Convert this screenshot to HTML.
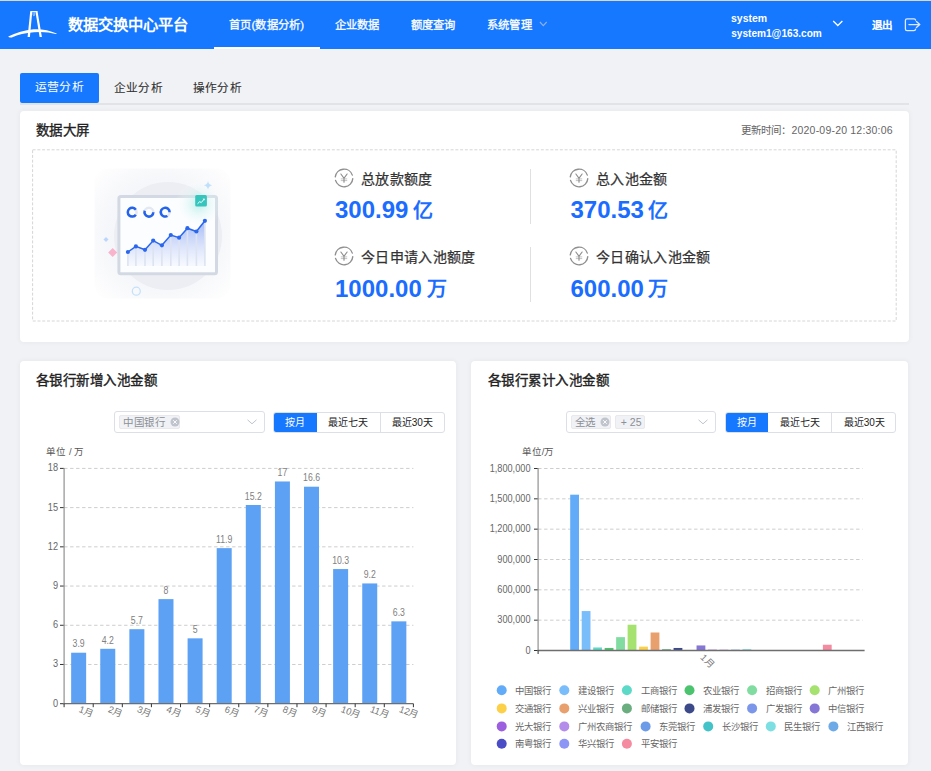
<!DOCTYPE html>
<html lang="zh-CN">
<head>
<meta charset="utf-8">
<style>
*{margin:0;padding:0;box-sizing:border-box;}
html,body{width:931px;height:771px;overflow:hidden;background:#f0f2f5;font-family:"Liberation Sans",sans-serif;}
.abs{position:absolute;}
.t{position:absolute;white-space:nowrap;line-height:1;}
#hdr{position:absolute;left:0;top:1px;width:931px;height:48px;background:#1677ff;}
#topline{position:absolute;left:0;top:0;width:931px;height:1px;background:#dcd8d0;}
.nav{color:#fff;font-size:11.3px;-webkit-text-stroke:0.3px #fff;letter-spacing:0.2px;}
.card{position:absolute;background:#fff;border-radius:4px;box-shadow:0 0 5px 1px rgba(0,0,0,0.04);}
.ctitle{font-size:13.5px;letter-spacing:0.55px;font-weight:400;color:#222;-webkit-text-stroke:0.35px #222;}
.stat-lbl{font-size:14px;color:#333;font-weight:400;-webkit-text-stroke:0.25px #333;letter-spacing:0.35px;}
.stat-num{font-size:24px;color:#1a6dff;font-weight:bold;}
.stat-unit{font-size:20px;color:#1a6dff;font-weight:bold;}
</style>
</head>
<body>
<div id="topline"></div>
<div id="hdr"></div>
<!-- logo -->
<svg class="abs" style="left:0;top:0" width="70" height="48" viewBox="0 0 70 48">
  <g fill="#fff">
  <path d="M8.2 36.6 Q 20 30.6 33.5 29.2 Q 46 28.6 56.6 33.4 Q 56.8 34.2 55.8 33.9 Q 46 31.4 34 32.3 Q 21 33.4 11.8 37.4 Q 8.6 37.8 8.2 36.6 Z"/>
  <path d="M30.2 11.4 L32.3 11.4 L29.9 36.9 L27.6 36.9 Z"/>
  <path d="M35.4 11.2 L37.5 11.2 L41.9 36.9 L39.6 36.9 Z"/>
  <rect x="30.4" y="11.1" width="7" height="0.9"/>
  </g>
  <g fill="none" stroke="#fff" stroke-width="0.7" opacity="0.85"><path d="M33.1 11.8 V15.2 Q33.9 16.6 34.7 15.2 V11.8"/></g>
</svg>
<div class="t" style="left:68px;top:16.5px;font-size:15.3px;font-weight:bold;color:#fff;">数据交换中心平台</div>
<div class="t nav" style="left:229px;top:19.8px;">首页(数据分析)</div>
<div class="abs" style="left:213.5px;top:47px;width:106.5px;height:2px;background:#fff;"></div>
<div class="t nav" style="left:334.5px;top:19.8px;">企业数据</div>
<div class="t nav" style="left:410.5px;top:19.8px;">额度查询</div>
<div class="t nav" style="left:487px;top:19.8px;">系统管理</div>
<svg class="abs" style="left:535px;top:17px" width="16" height="12"><path d="M4.9 5 L8.3 8.6 L11.7 5" fill="none" stroke="#8fb0e6" stroke-width="1.1"/></svg>
<div class="t" style="left:731px;top:13.2px;font-size:10.5px;font-weight:bold;color:#fff;">system</div>
<div class="t" style="left:731.2px;top:28.5px;font-size:10.1px;font-weight:bold;color:#fff;">system1@163.com</div>
<svg class="abs" style="left:830px;top:17px" width="16" height="12"><path d="M3.2 4 L7.8 8.5 L12.4 4" fill="none" stroke="#fff" stroke-width="1.3"/></svg>
<div class="t nav" style="left:871.8px;top:20px;font-size:10.5px;-webkit-text-stroke:0.55px #fff;letter-spacing:0.6px;">退出</div>
<svg class="abs" style="left:900px;top:14px" width="26" height="22"><g fill="none" stroke="#dfe9ff" stroke-width="1.3" stroke-linecap="round" stroke-linejoin="round"><path d="M15.6 6.2 Q15.4 4.8 14 4.8 H7 Q5.4 4.8 5.4 6.4 V15 Q5.4 16.6 7 16.6 H14 Q15.4 16.6 15.6 15.2"/><path d="M8.9 10.6 H19.6 M16.4 7.6 L19.8 10.6 L16.4 13.6"/></g></svg>

<!-- tabs -->
<div class="abs" style="left:20px;top:103.2px;width:889px;height:1.8px;background:#e2e3e6;"></div>
<div class="abs" style="left:20px;top:73px;width:79px;height:30.4px;background:#1677ff;border-radius:2px;"></div>
<div class="t" style="left:34.5px;top:82px;font-size:11.85px;color:#fff;letter-spacing:0.35px;">运营分析</div>
<div class="t" style="left:113.6px;top:82px;font-size:11.7px;color:#333;-webkit-text-stroke:0.1px #333;letter-spacing:0.35px;">企业分析</div>
<div class="t" style="left:192.6px;top:82px;font-size:11.7px;color:#333;-webkit-text-stroke:0.1px #333;letter-spacing:0.35px;">操作分析</div>

<!-- card 1 -->
<div class="card" style="left:20px;top:110.8px;width:889px;height:230.8px;"></div>
<div class="t ctitle" style="left:35.5px;top:124px;">数据大屏</div>
<div class="t" style="left:740.5px;top:125.3px;font-size:10.5px;letter-spacing:0.2px;color:#666;">更新时间：2020-09-20 12:30:06</div>
<svg class="abs" style="left:0;top:0" width="931" height="340"><rect x="32.6" y="149.8" width="863.6" height="171.2" fill="none" stroke="#d6d6d6" stroke-width="1" stroke-dasharray="3 1.75"/></svg>



<!-- illustration -->
<svg class="abs" style="left:0;top:0" width="260" height="320" viewBox="0 0 260 320">
<defs>
<radialGradient id="bgsq" cx="0.5" cy="0.5" r="0.7"><stop offset="0" stop-color="#eef1f6"/><stop offset="0.6" stop-color="#f6f7fa"/><stop offset="1" stop-color="#ffffff"/></radialGradient>
<linearGradient id="areag" x1="0" y1="0" x2="0" y2="1"><stop offset="0" stop-color="#a3b9f5"/><stop offset="1" stop-color="#f3f6fe" stop-opacity="0.6"/></linearGradient>
<radialGradient id="glow" cx="0.5" cy="0.5" r="0.5"><stop offset="0" stop-color="#a8e9e4" stop-opacity="0.75"/><stop offset="1" stop-color="#ffffff" stop-opacity="0"/></radialGradient>
</defs>
<rect x="94.5" y="168.6" width="136" height="130" rx="14" fill="url(#bgsq)"/>
<circle cx="168" cy="236" r="54" fill="#eceef3"/>
<rect x="118.9" y="196.4" width="97.6" height="77.3" rx="2" fill="#fcfdff" stroke="#d3d9e3" stroke-width="3"/>
<circle cx="199" cy="204" r="24" fill="url(#glow)"/>
<rect x="195.2" y="195.1" width="11.7" height="11.5" rx="1.5" fill="#36c5bd"/>
<path d="M197.5 203.8 L199.8 201.6 L201.2 202.6 L204.3 199" fill="none" stroke="#fff" stroke-width="1"/>
<path d="M202.6 198.8 L204.6 198.6 L204.4 200.6 Z" fill="#fff"/>
<path d="M127.9,266 L127.9,252 L135.9,246.4 L145,249.8 L153.2,240.6 L161.9,245.3 L170.8,235 L179.1,237.7 L187.4,228.2 L196.4,231.5 L204.9,220.8 L204.9,266 Z" fill="url(#areag)"/>
<g stroke="#dde3f0" stroke-width="1.6"><line x1="127.9" y1="252" x2="127.9" y2="265.9"/><line x1="135.9" y1="246.4" x2="135.9" y2="265.9"/><line x1="145" y1="249.8" x2="145" y2="265.9"/><line x1="153.2" y1="240.6" x2="153.2" y2="265.9"/><line x1="161.9" y1="245.3" x2="161.9" y2="265.9"/><line x1="170.8" y1="235" x2="170.8" y2="265.9"/><line x1="179.1" y1="237.7" x2="179.1" y2="265.9"/><line x1="187.4" y1="228.2" x2="187.4" y2="265.9"/><line x1="196.4" y1="231.5" x2="196.4" y2="265.9"/><line x1="204.9" y1="220.8" x2="204.9" y2="265.9"/></g>
<polyline points="127.9,252 135.9,246.4 145,249.8 153.2,240.6 161.9,245.3 170.8,235 179.1,237.7 187.4,228.2 196.4,231.5 204.9,220.8" fill="none" stroke="#2b67ee" stroke-width="1.5"/>
<g fill="#2b67ee"><circle cx="127.9" cy="252" r="2.1"/><circle cx="135.9" cy="246.4" r="2.1"/><circle cx="145" cy="249.8" r="2.1"/><circle cx="153.2" cy="240.6" r="2.1"/><circle cx="161.9" cy="245.3" r="2.1"/><circle cx="170.8" cy="235" r="2.1"/><circle cx="179.1" cy="237.7" r="2.1"/><circle cx="187.4" cy="228.2" r="2.1"/><circle cx="196.4" cy="231.5" r="2.1"/><circle cx="204.9" cy="220.8" r="2.1"/></g>
<g fill="none" stroke-width="2.5"><circle cx="132.2" cy="212.2" r="4.4" stroke="#e4e8f0"/><path d="M135.80 209.68 A4.4 4.4 0 1 0 135.80 214.72" stroke="#2463eb"/><circle cx="148.9" cy="212.2" r="4.4" stroke="#e4e8f0"/><path d="M153.30 212.20 A4.4 4.4 0 1 1 144.77 210.70" stroke="#2463eb"/><circle cx="165.2" cy="212.2" r="4.4" stroke="#e4e8f0"/><path d="M167.40 216.01 A4.4 4.4 0 1 1 169.60 212.20" stroke="#2463eb"/></g>
<path d="M112.7 248 L117.2 252.5 L112.7 257 L108.2 252.5 Z" fill="#f9b3cc"/>
<path d="M106 236.9 L108.5 239.4 L106 241.9 L103.5 239.4 Z" fill="#bcd6fb"/>
<path d="M208 181 Q208.6 184.7 212.3 185.3 Q208.6 185.9 208 189.6 Q207.4 185.9 203.7 185.3 Q207.4 184.7 208 181 Z" fill="#bfe0fb"/>
<circle cx="136.3" cy="291.2" r="4" fill="none" stroke="#c5e0fb" stroke-width="1.3"/>
</svg>

<!-- stats -->
<svg width="0" height="0" style="position:absolute"><defs>
<symbol id="yen" viewBox="0 0 20 20"><g fill="none" stroke="#8f8f8f" stroke-width="1.35" stroke-linecap="round"><path d="M18.78 10.61 A8.8 8.8 0 0 1 1.54 12.43"/><path d="M1.27 8.93 A8.8 8.8 0 0 1 18.32 7.13"/><path d="M6.9 6.0 L10 10.3 L13.1 6.0 M10 10.3 V14.2" stroke-width="1.15"/><path d="M7.2 10.9 H12.8 M7.2 12.6 H12.8" stroke-width="0.75" opacity="0.7"/></g></symbol>
</defs></svg>
<svg class="abs" style="left:333.6px;top:168.4px" width="20" height="20"><use href="#yen"/></svg>
<div class="t stat-lbl" style="left:361px;top:172px;">总放款额度</div>
<div class="t stat-num" style="left:335px;top:198px;">300.99</div>
<div class="t stat-unit" style="left:413px;top:201px;">亿</div>
<svg class="abs" style="left:333.6px;top:246.4px" width="20" height="20"><use href="#yen"/></svg>
<div class="t stat-lbl" style="left:361px;top:250px;">今日申请入池额度</div>
<div class="t stat-num" style="left:335px;top:277px;">1000.00</div>
<div class="t stat-unit" style="left:427px;top:279px;">万</div>
<div class="abs" style="left:530px;top:169px;width:1px;height:55px;background:#e0e0e0;"></div>
<div class="abs" style="left:530px;top:247px;width:1px;height:55px;background:#e0e0e0;"></div>
<svg class="abs" style="left:568.6px;top:168.4px" width="20" height="20"><use href="#yen"/></svg>
<div class="t stat-lbl" style="left:596px;top:172px;">总入池金额</div>
<div class="t stat-num" style="left:570.5px;top:198px;">370.53</div>
<div class="t stat-unit" style="left:648px;top:201px;">亿</div>
<svg class="abs" style="left:568.6px;top:246.4px" width="20" height="20"><use href="#yen"/></svg>
<div class="t stat-lbl" style="left:596px;top:250px;">今日确认入池金额</div>
<div class="t stat-num" style="left:570.5px;top:277px;">600.00</div>
<div class="t stat-unit" style="left:648px;top:279px;">万</div>

<!-- card 2 -->
<div class="card" style="left:20px;top:361.2px;width:436px;height:403.8px;"></div>
<div class="t ctitle" style="left:35.5px;top:374.3px;">各银行新增入池金额</div>
<!-- card 3 -->
<div class="card" style="left:471.2px;top:361.2px;width:436.8px;height:403.8px;"></div>
<div class="t ctitle" style="left:487.5px;top:374.3px;">各银行累计入池金额</div>

<!-- controls -->
<style>
.sel{position:absolute;height:21.4px;border:1px solid #dcdfe6;border-radius:3px;background:#fff;}
.tag{position:absolute;height:14.5px;background:#f0f2f5;border:1px solid #e9e9eb;border-radius:2px;}
.tagt{position:absolute;white-space:nowrap;line-height:1;font-size:10.5px;color:#8c8f96;letter-spacing:0.5px;}
.bgrp{position:absolute;height:21.2px;border:1px solid #dcdfe6;border-radius:3px;background:#fff;overflow:hidden;}
.bact{position:absolute;top:-1px;height:21.2px;background:#1677ff;}
.bsep{position:absolute;top:0;width:1px;height:100%;background:#dcdfe6;}
.btxt{position:absolute;white-space:nowrap;line-height:1;font-size:10px;color:#222;}
</style>
<svg width="0" height="0" style="position:absolute"><defs>
<symbol id="tclose" viewBox="0 0 10 10"><circle cx="5" cy="5" r="4.5" fill="#c0c4cc"/><path d="M3.2 3.2 L6.8 6.8 M6.8 3.2 L3.2 6.8" stroke="#fff" stroke-width="0.9"/></symbol>
<symbol id="schev" viewBox="0 0 12 8"><path d="M1.5 1.8 L6 5.8 L10.5 1.8" fill="none" stroke="#c0c4cc" stroke-width="1"/></symbol>
</defs></svg>
<div class="sel" style="left:114px;top:411.4px;width:151px;"></div>
<div class="tag" style="left:118.8px;top:414.5px;width:61.2px;"></div>
<div class="tagt" style="left:123px;top:416.5px;">中国银行</div>
<svg class="abs" style="left:170.2px;top:416.7px" width="10" height="10"><use href="#tclose"/></svg>
<svg class="abs" style="left:245.5px;top:418px" width="12" height="8"><use href="#schev"/></svg>
<div class="bgrp" style="left:273px;top:412px;width:171.5px;">
  <div class="bact" style="left:-1px;width:44.3px;"></div>
  <div class="bsep" style="left:105.7px;"></div>
</div>
<div class="btxt" style="left:285px;top:417.5px;color:#fff;">按月</div>
<div class="btxt" style="left:328.2px;top:417.5px;">最近七天</div>
<div class="btxt" style="left:391.8px;top:417.5px;">最近30天</div>

<div class="sel" style="left:565.5px;top:411.4px;width:150.1px;"></div>
<div class="tag" style="left:570.6px;top:414.5px;width:40px;"></div>
<div class="tagt" style="left:574.6px;top:416.5px;">全选</div>
<svg class="abs" style="left:600.3px;top:416.7px" width="10" height="10"><use href="#tclose"/></svg>
<div class="tag" style="left:615.3px;top:414.5px;width:30.2px;"></div>
<div class="tagt" style="left:620.8px;top:416.5px;letter-spacing:0;">+ 25</div>
<svg class="abs" style="left:696.8px;top:418px" width="12" height="8"><use href="#schev"/></svg>
<div class="bgrp" style="left:724.5px;top:412px;width:171.9px;">
  <div class="bact" style="left:-1px;width:43.8px;"></div>
  <div class="bsep" style="left:105.8px;"></div>
</div>
<div class="btxt" style="left:736.5px;top:417.5px;color:#fff;">按月</div>
<div class="btxt" style="left:780.2px;top:417.5px;">最近七天</div>
<div class="btxt" style="left:843.8px;top:417.5px;">最近30天</div>

<!-- charts -->
<svg class="abs" style="left:0;top:0" width="931" height="771" viewBox="0 0 931 771" font-family="Liberation Sans, sans-serif">
<line x1="64.1" y1="664.48" x2="413.4" y2="664.48" stroke="#cdcdcd" stroke-width="1" stroke-dasharray="3.4 2.6"/>
<line x1="64.1" y1="625.27" x2="413.4" y2="625.27" stroke="#cdcdcd" stroke-width="1" stroke-dasharray="3.4 2.6"/>
<line x1="64.1" y1="586.05" x2="413.4" y2="586.05" stroke="#cdcdcd" stroke-width="1" stroke-dasharray="3.4 2.6"/>
<line x1="64.1" y1="546.83" x2="413.4" y2="546.83" stroke="#cdcdcd" stroke-width="1" stroke-dasharray="3.4 2.6"/>
<line x1="64.1" y1="507.62" x2="413.4" y2="507.62" stroke="#cdcdcd" stroke-width="1" stroke-dasharray="3.4 2.6"/>
<line x1="64.1" y1="468.40" x2="413.4" y2="468.40" stroke="#cdcdcd" stroke-width="1" stroke-dasharray="3.4 2.6"/>
<line x1="60" y1="703.70" x2="64.1" y2="703.70" stroke="#333" stroke-width="1"/>
<text transform="translate(58 706.70) scale(0.92 1)" font-size="10" fill="#666" text-anchor="end">0</text>
<line x1="60" y1="664.48" x2="64.1" y2="664.48" stroke="#333" stroke-width="1"/>
<text transform="translate(58 667.48) scale(0.92 1)" font-size="10" fill="#666" text-anchor="end">3</text>
<line x1="60" y1="625.27" x2="64.1" y2="625.27" stroke="#333" stroke-width="1"/>
<text transform="translate(58 628.27) scale(0.92 1)" font-size="10" fill="#666" text-anchor="end">6</text>
<line x1="60" y1="586.05" x2="64.1" y2="586.05" stroke="#333" stroke-width="1"/>
<text transform="translate(58 589.05) scale(0.92 1)" font-size="10" fill="#666" text-anchor="end">9</text>
<line x1="60" y1="546.83" x2="64.1" y2="546.83" stroke="#333" stroke-width="1"/>
<text transform="translate(58 549.83) scale(0.92 1)" font-size="10" fill="#666" text-anchor="end">12</text>
<line x1="60" y1="507.62" x2="64.1" y2="507.62" stroke="#333" stroke-width="1"/>
<text transform="translate(58 510.62) scale(0.92 1)" font-size="10" fill="#666" text-anchor="end">15</text>
<line x1="60" y1="468.40" x2="64.1" y2="468.40" stroke="#333" stroke-width="1"/>
<text transform="translate(58 471.40) scale(0.92 1)" font-size="10" fill="#666" text-anchor="end">18</text>
<line x1="64.1" y1="468" x2="64.1" y2="704.2" stroke="#999" stroke-width="1.3"/>
<rect x="71.15" y="652.72" width="15" height="50.98" fill="#5da1f4"/>
<text transform="translate(78.65 647.42) scale(0.87 1)" font-size="10" fill="#808080" text-anchor="middle">3.9</text>
<rect x="100.26" y="648.80" width="15" height="54.90" fill="#5da1f4"/>
<text transform="translate(107.76 643.50) scale(0.87 1)" font-size="10" fill="#808080" text-anchor="middle">4.2</text>
<rect x="129.37" y="629.19" width="15" height="74.51" fill="#5da1f4"/>
<text transform="translate(136.87 623.89) scale(0.87 1)" font-size="10" fill="#808080" text-anchor="middle">5.7</text>
<rect x="158.48" y="599.12" width="15" height="104.58" fill="#5da1f4"/>
<text transform="translate(165.98 593.82) scale(0.87 1)" font-size="10" fill="#808080" text-anchor="middle">8</text>
<rect x="187.59" y="638.34" width="15" height="65.36" fill="#5da1f4"/>
<text transform="translate(195.09 633.04) scale(0.87 1)" font-size="10" fill="#808080" text-anchor="middle">5</text>
<rect x="216.70" y="548.14" width="15" height="155.56" fill="#5da1f4"/>
<text transform="translate(224.20 542.84) scale(0.87 1)" font-size="10" fill="#808080" text-anchor="middle">11.9</text>
<rect x="245.80" y="505.00" width="15" height="198.70" fill="#5da1f4"/>
<text transform="translate(253.30 499.70) scale(0.87 1)" font-size="10" fill="#808080" text-anchor="middle">15.2</text>
<rect x="274.91" y="481.47" width="15" height="222.23" fill="#5da1f4"/>
<text transform="translate(282.41 476.17) scale(0.87 1)" font-size="10" fill="#808080" text-anchor="middle">17</text>
<rect x="304.02" y="486.70" width="15" height="217.00" fill="#5da1f4"/>
<text transform="translate(311.52 481.40) scale(0.87 1)" font-size="10" fill="#808080" text-anchor="middle">16.6</text>
<rect x="333.13" y="569.06" width="15" height="134.64" fill="#5da1f4"/>
<text transform="translate(340.63 563.76) scale(0.87 1)" font-size="10" fill="#808080" text-anchor="middle">10.3</text>
<rect x="362.24" y="583.44" width="15" height="120.26" fill="#5da1f4"/>
<text transform="translate(369.74 578.14) scale(0.87 1)" font-size="10" fill="#808080" text-anchor="middle">9.2</text>
<rect x="391.35" y="621.35" width="15" height="82.36" fill="#5da1f4"/>
<text transform="translate(398.85 616.05) scale(0.87 1)" font-size="10" fill="#808080" text-anchor="middle">6.3</text>
<line x1="63.599999999999994" y1="703.7" x2="413.4" y2="703.7" stroke="#6e6e6e" stroke-width="1.3"/>
<line x1="64.10" y1="703.7" x2="64.10" y2="707.2" stroke="#333" stroke-width="1"/>
<line x1="93.21" y1="703.7" x2="93.21" y2="707.2" stroke="#333" stroke-width="1"/>
<line x1="122.32" y1="703.7" x2="122.32" y2="707.2" stroke="#333" stroke-width="1"/>
<line x1="151.42" y1="703.7" x2="151.42" y2="707.2" stroke="#333" stroke-width="1"/>
<line x1="180.53" y1="703.7" x2="180.53" y2="707.2" stroke="#333" stroke-width="1"/>
<line x1="209.64" y1="703.7" x2="209.64" y2="707.2" stroke="#333" stroke-width="1"/>
<line x1="238.75" y1="703.7" x2="238.75" y2="707.2" stroke="#333" stroke-width="1"/>
<line x1="267.86" y1="703.7" x2="267.86" y2="707.2" stroke="#333" stroke-width="1"/>
<line x1="296.97" y1="703.7" x2="296.97" y2="707.2" stroke="#333" stroke-width="1"/>
<line x1="326.07" y1="703.7" x2="326.07" y2="707.2" stroke="#333" stroke-width="1"/>
<line x1="355.18" y1="703.7" x2="355.18" y2="707.2" stroke="#333" stroke-width="1"/>
<line x1="384.29" y1="703.7" x2="384.29" y2="707.2" stroke="#333" stroke-width="1"/>
<line x1="413.40" y1="703.7" x2="413.40" y2="707.2" stroke="#333" stroke-width="1"/>
<text x="79.55" y="711.90" font-size="9.4" fill="#777" transform="rotate(21 79.55 708.6)">1月</text>
<text x="108.66" y="711.90" font-size="9.4" fill="#777" transform="rotate(21 108.66 708.6)">2月</text>
<text x="137.77" y="711.90" font-size="9.4" fill="#777" transform="rotate(21 137.77 708.6)">3月</text>
<text x="166.88" y="711.90" font-size="9.4" fill="#777" transform="rotate(21 166.88 708.6)">4月</text>
<text x="195.99" y="711.90" font-size="9.4" fill="#777" transform="rotate(21 195.99 708.6)">5月</text>
<text x="225.10" y="711.90" font-size="9.4" fill="#777" transform="rotate(21 225.10 708.6)">6月</text>
<text x="254.20" y="711.90" font-size="9.4" fill="#777" transform="rotate(21 254.20 708.6)">7月</text>
<text x="283.31" y="711.90" font-size="9.4" fill="#777" transform="rotate(21 283.31 708.6)">8月</text>
<text x="312.42" y="711.90" font-size="9.4" fill="#777" transform="rotate(21 312.42 708.6)">9月</text>
<text x="341.53" y="711.90" font-size="9.4" fill="#777" transform="rotate(21 341.53 708.6)">10月</text>
<text x="370.64" y="711.90" font-size="9.4" fill="#777" transform="rotate(21 370.64 708.6)">11月</text>
<text x="399.75" y="711.90" font-size="9.4" fill="#777" transform="rotate(21 399.75 708.6)">12月</text>
<text x="46.3" y="455.4" font-size="9.5" fill="#555">单位 / 万</text>
<line x1="538.1" y1="620.17" x2="862.6" y2="620.17" stroke="#cdcdcd" stroke-width="1" stroke-dasharray="3.4 2.6"/>
<line x1="538.1" y1="589.83" x2="862.6" y2="589.83" stroke="#cdcdcd" stroke-width="1" stroke-dasharray="3.4 2.6"/>
<line x1="538.1" y1="559.50" x2="862.6" y2="559.50" stroke="#cdcdcd" stroke-width="1" stroke-dasharray="3.4 2.6"/>
<line x1="538.1" y1="529.17" x2="862.6" y2="529.17" stroke="#cdcdcd" stroke-width="1" stroke-dasharray="3.4 2.6"/>
<line x1="538.1" y1="498.83" x2="862.6" y2="498.83" stroke="#cdcdcd" stroke-width="1" stroke-dasharray="3.4 2.6"/>
<line x1="538.1" y1="468.50" x2="862.6" y2="468.50" stroke="#cdcdcd" stroke-width="1" stroke-dasharray="3.4 2.6"/>
<line x1="534" y1="650.50" x2="538.1" y2="650.50" stroke="#333" stroke-width="1"/>
<text transform="translate(530.5 653.50) scale(0.92 1)" font-size="10" fill="#666" text-anchor="end">0</text>
<line x1="534" y1="620.17" x2="538.1" y2="620.17" stroke="#333" stroke-width="1"/>
<text transform="translate(530.5 623.17) scale(0.92 1)" font-size="10" fill="#666" text-anchor="end">300,000</text>
<line x1="534" y1="589.83" x2="538.1" y2="589.83" stroke="#333" stroke-width="1"/>
<text transform="translate(530.5 592.83) scale(0.92 1)" font-size="10" fill="#666" text-anchor="end">600,000</text>
<line x1="534" y1="559.50" x2="538.1" y2="559.50" stroke="#333" stroke-width="1"/>
<text transform="translate(530.5 562.50) scale(0.92 1)" font-size="10" fill="#666" text-anchor="end">900,000</text>
<line x1="534" y1="529.17" x2="538.1" y2="529.17" stroke="#333" stroke-width="1"/>
<text transform="translate(530.5 532.17) scale(0.92 1)" font-size="10" fill="#666" text-anchor="end">1,200,000</text>
<line x1="534" y1="498.83" x2="538.1" y2="498.83" stroke="#333" stroke-width="1"/>
<text transform="translate(530.5 501.83) scale(0.92 1)" font-size="10" fill="#666" text-anchor="end">1,500,000</text>
<line x1="534" y1="468.50" x2="538.1" y2="468.50" stroke="#333" stroke-width="1"/>
<text transform="translate(530.5 471.50) scale(0.92 1)" font-size="10" fill="#666" text-anchor="end">1,800,000</text>
<line x1="538.1" y1="468" x2="538.1" y2="651.0" stroke="#999" stroke-width="1.3"/>
<rect x="570.20" y="494.69" width="8.8" height="155.81" fill="#62abf9"/>
<rect x="581.69" y="611.07" width="8.8" height="39.43" fill="#79bdfb"/>
<rect x="593.17" y="647.47" width="8.8" height="3.03" fill="#5dd9c8"/>
<rect x="604.66" y="647.97" width="8.8" height="2.53" fill="#4cc46f"/>
<rect x="616.14" y="637.15" width="8.8" height="13.35" fill="#80dca0"/>
<rect x="627.63" y="624.72" width="8.8" height="25.78" fill="#a5e26f"/>
<rect x="639.12" y="646.66" width="8.8" height="3.84" fill="#fdd04a"/>
<rect x="650.60" y="632.50" width="8.8" height="18.00" fill="#e9a06f"/>
<rect x="662.09" y="649.19" width="8.8" height="1.31" fill="#6aae80"/>
<rect x="673.57" y="647.97" width="8.8" height="2.53" fill="#3c4a8a"/>
<rect x="696.55" y="645.44" width="8.8" height="5.06" fill="#8676d6"/>
<rect x="708.03" y="649.70" width="8.8" height="0.80" fill="#9b5fe0"/>
<rect x="719.52" y="649.70" width="8.8" height="0.80" fill="#b48ce9"/>
<rect x="731.00" y="649.70" width="8.8" height="0.80" fill="#6c9be8"/>
<rect x="742.49" y="649.49" width="8.8" height="1.01" fill="#43c3c8"/>
<rect x="822.89" y="644.74" width="8.8" height="5.76" fill="#f58ba0"/>
<line x1="537.6" y1="650.5" x2="864.6" y2="650.5" stroke="#6e6e6e" stroke-width="1.3"/>
<line x1="538.1" y1="650.5" x2="538.1" y2="654.0" stroke="#333" stroke-width="1"/>
<text x="702.15" y="658.90" font-size="9.4" fill="#777" transform="rotate(45 702.15 655.6)">1月</text>
<text x="521.7" y="455.4" font-size="9.5" fill="#555">单位/万</text>
<circle cx="501.70" cy="690.3" r="5" fill="#62abf9"/>
<text x="515.30" y="693.70" font-size="9.35" fill="#666">中国银行</text>
<circle cx="564.30" cy="690.3" r="5" fill="#79bdfb"/>
<text x="577.90" y="693.70" font-size="9.35" fill="#666">建设银行</text>
<circle cx="626.90" cy="690.3" r="5" fill="#5dd9c8"/>
<text x="640.50" y="693.70" font-size="9.35" fill="#666">工商银行</text>
<circle cx="689.50" cy="690.3" r="5" fill="#4cc46f"/>
<text x="703.10" y="693.70" font-size="9.35" fill="#666">农业银行</text>
<circle cx="752.10" cy="690.3" r="5" fill="#80dca0"/>
<text x="765.70" y="693.70" font-size="9.35" fill="#666">招商银行</text>
<circle cx="814.70" cy="690.3" r="5" fill="#a5e26f"/>
<text x="828.30" y="693.70" font-size="9.35" fill="#666">广州银行</text>
<circle cx="501.70" cy="708.4" r="5" fill="#fdd04a"/>
<text x="515.30" y="711.80" font-size="9.35" fill="#666">交通银行</text>
<circle cx="564.30" cy="708.4" r="5" fill="#e9a06f"/>
<text x="577.90" y="711.80" font-size="9.35" fill="#666">兴业银行</text>
<circle cx="626.90" cy="708.4" r="5" fill="#6aae80"/>
<text x="640.50" y="711.80" font-size="9.35" fill="#666">邮储银行</text>
<circle cx="689.50" cy="708.4" r="5" fill="#3c4a8a"/>
<text x="703.10" y="711.80" font-size="9.35" fill="#666">浦发银行</text>
<circle cx="752.10" cy="708.4" r="5" fill="#7c97ea"/>
<text x="765.70" y="711.80" font-size="9.35" fill="#666">广发银行</text>
<circle cx="814.70" cy="708.4" r="5" fill="#8676d6"/>
<text x="828.30" y="711.80" font-size="9.35" fill="#666">中信银行</text>
<circle cx="501.70" cy="726.4" r="5" fill="#9b5fe0"/>
<text x="515.30" y="729.80" font-size="9.35" fill="#666">光大银行</text>
<circle cx="564.30" cy="726.4" r="5" fill="#b48ce9"/>
<text x="577.90" y="729.80" font-size="9.35" fill="#666">广州农商银行</text>
<circle cx="645.60" cy="726.4" r="5" fill="#6c9be8"/>
<text x="659.20" y="729.80" font-size="9.35" fill="#666">东莞银行</text>
<circle cx="708.20" cy="726.4" r="5" fill="#43c3c8"/>
<text x="721.80" y="729.80" font-size="9.35" fill="#666">长沙银行</text>
<circle cx="770.80" cy="726.4" r="5" fill="#7ddfe2"/>
<text x="784.40" y="729.80" font-size="9.35" fill="#666">民生银行</text>
<circle cx="833.40" cy="726.4" r="5" fill="#6eaae6"/>
<text x="847.00" y="729.80" font-size="9.35" fill="#666">江西银行</text>
<circle cx="501.70" cy="743.8" r="5" fill="#4a4dc6"/>
<text x="515.30" y="747.20" font-size="9.35" fill="#666">南粤银行</text>
<circle cx="564.30" cy="743.8" r="5" fill="#8d95f5"/>
<text x="577.90" y="747.20" font-size="9.35" fill="#666">华兴银行</text>
<circle cx="626.90" cy="743.8" r="5" fill="#f58ba0"/>
<text x="640.50" y="747.20" font-size="9.35" fill="#666">平安银行</text>
</svg>
<!-- /charts -->
</body>
</html>
